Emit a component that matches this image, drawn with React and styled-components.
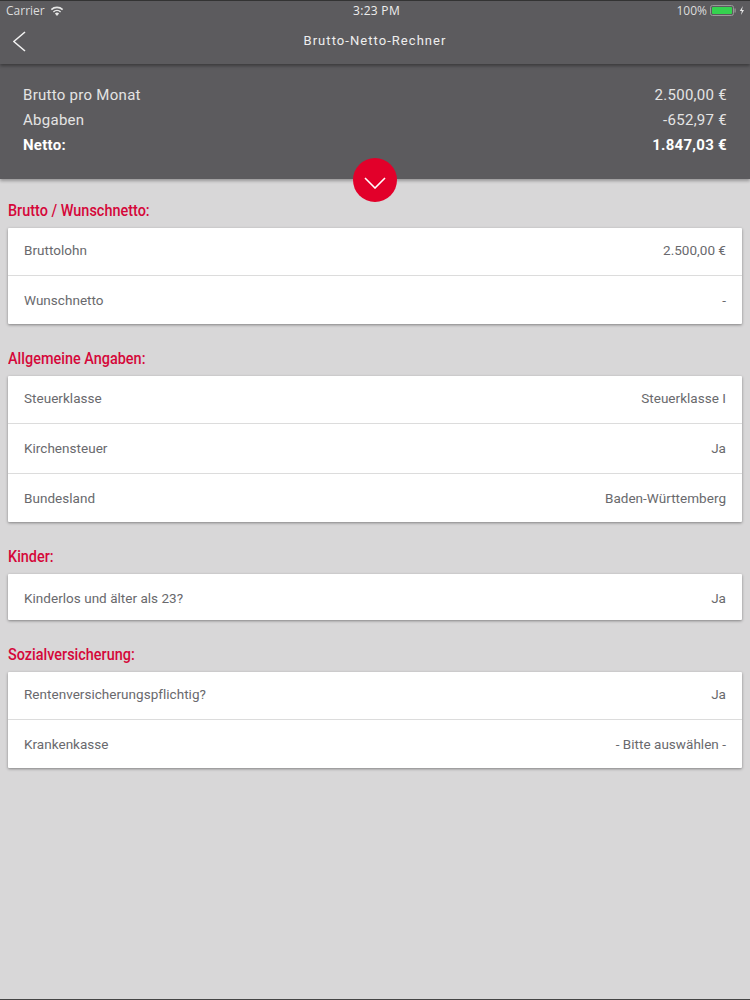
import React from 'react';
import styled, { createGlobalStyle } from 'styled-components';

const Global = createGlobalStyle`
  html, body { margin: 0; padding: 0; background: #d8d7d8; }
  body { font-family: Roboto, "Liberation Sans", sans-serif; }
`;
const Page = styled.div`
  width: 750px; height: 1000px; overflow: hidden; background: #d8d7d8;
  display: flex; flex-direction: column; border-top: 1px solid #333; border-bottom: 1px solid #444; box-sizing: border-box;
`;
const Header = styled.header`
  background: #5c5b5e; color: #fff; box-shadow: 0 2px 3px rgba(0,0,0,.3); position: relative; height: 178px; flex: none;
  display: flex; flex-direction: column;
`;
const TopBar = styled.div`
  height: 63px; flex: none; box-shadow: 0 2px 3px rgba(0,0,0,.35); display: flex; flex-direction: column;
`;
const StatusBar = styled.div`
  height: 19px; display: grid; grid-template-columns: 1fr auto 1fr; align-items: center;
  padding: 0 4px 0 6px; font: 12px "Open Sans", "Liberation Sans", sans-serif; color: #ddd;
`;
const StatusSide = styled.div`
  display: flex; align-items: center; gap: ${p => p.$gap || 5}px; justify-content: ${p => p.$right ? 'flex-end' : 'flex-start'};
`;
const Clock = styled.span`font-weight: 500; color: #eee; font-size: 12px; letter-spacing: .3px; margin-left: 1px;`;
const NavBar = styled.div`
  flex: 1; position: relative; display: flex; align-items: center; justify-content: center;
  font-size: 13px; font-weight: 400; letter-spacing: 1.05px; color: #eee; padding-bottom: 4px;
`;
const Back = styled.svg`position: absolute; left: 13px; top: 11px;`;
const Summary = styled.div`
  padding: 18px 23px 0; display: flex; flex-direction: column;
`;
const SummaryRow = styled.div`
  display: flex; justify-content: space-between; height: 25px; align-items: center;
  font-size: 15px; letter-spacing: .28px; color: ${p => p.$bold ? '#fff' : '#e4e4e4'}; font-weight: ${p => p.$bold ? 700 : 400};
`;
const Toggle = styled.div`
  position: absolute; left: 353px; top: 157px; width: 44px; height: 44px; border-radius: 50%;
  background: #e2002a; display: flex; align-items: center; justify-content: center;
  svg { margin-top: 6px; }
`;
const Content = styled.main`
  padding: 21px 8px 0; display: flex; flex-direction: column;
`;
const Title = styled.h2`
  margin: 0 0 8px; font-size: 17px; line-height: 20px; font-weight: 500; color: #d5073a; white-space: nowrap;
  transform-origin: left; transform: scaleX(.85);
`;
const Card = styled.section`
  background: #fff; box-shadow: 0 1px 3px rgba(0,0,0,.4); margin-bottom: 24px; border-radius: 1px;
`;
const Row = styled.div`
  height: 47px; padding: 0 16px 1px; display: flex; align-items: center; justify-content: space-between;
  font-size: 13.5px; letter-spacing: .03px; color: #69696d;
  & + & { border-top: 1px solid #dcdcdc; }
  &:first-child { padding-bottom: 3px; height: 44px; }
  &:only-child { padding-bottom: 0; height: 47px; margin-bottom: -1px; }
  &:nth-child(2):not(:last-child) { height: 48px; }
`;

const Wifi = () => (
  <svg width="14" height="10" viewBox="0 0 14 10" fill="#e6e6e6">
    <path d="M7 10 4.9 7.6a3 3 0 0 1 4.2 0Z"/>
    <path d="M3.9 6.5 2.9 5.4a6 6 0 0 1 8.2 0l-1 1.1a4.6 4.6 0 0 0-6.2 0Z"/>
    <path d="M1.9 4.3.8 3.1a9 9 0 0 1 12.4 0l-1.1 1.2a7.4 7.4 0 0 0-10.2 0Z"/>
  </svg>
);
const Battery = () => (
  <svg width="36" height="11" viewBox="0 0 36 11">
    <rect x=".5" y=".5" width="23" height="10" rx="2" fill="none" stroke="#999"/>
    <rect x="2" y="2" width="20" height="7" rx="1" fill="#35d24f"/>
    <rect x="24.5" y="3.5" width="1.2" height="4" fill="#999"/>
    <path d="M32.8 1 29.8 6h2l-.8 4 3-5h-2Z" fill="#e6e6e6"/>
  </svg>
);

const sections = [
  ['Brutto / Wunschnetto:', [['Bruttolohn', '2.500,00 €'], ['Wunschnetto', '-']]],
  ['Allgemeine Angaben:', [['Steuerklasse', 'Steuerklasse I'], ['Kirchensteuer', 'Ja'], ['Bundesland', 'Baden-Württemberg']]],
  ['Kinder:', [['Kinderlos und älter als 23?', 'Ja']]],
  ['Sozialversicherung:', [['Rentenversicherungspflichtig?', 'Ja'], ['Krankenkasse', '- Bitte auswählen -']]],
];

export default function App() {
  return (
    <Page>
      <Global />
      <Header>
        <TopBar>
          <StatusBar>
            <StatusSide><span>Carrier</span><Wifi /></StatusSide>
            <Clock>3:23 PM</Clock>
            <StatusSide $right $gap={3}><span>100%</span><Battery /></StatusSide>
          </StatusBar>
          <NavBar>
            <Back width="14" height="22" viewBox="0 0 14 22" fill="none" stroke="#f2f2f2" strokeWidth="1.6"><path d="M12 1 .8 10.5 12 20"/></Back>
            Brutto-Netto-Rechner
          </NavBar>
        </TopBar>
        <Summary>
          <SummaryRow><span>Brutto pro Monat</span><span>2.500,00 €</span></SummaryRow>
          <SummaryRow><span>Abgaben</span><span>-652,97 €</span></SummaryRow>
          <SummaryRow $bold><span>Netto:</span><span>1.847,03 €</span></SummaryRow>
        </Summary>
        <Toggle>
          <svg width="22" height="12" viewBox="0 0 22 12" fill="none" stroke="#fff" strokeWidth="1.6"><path d="M1 1l10 10L21 1"/></svg>
        </Toggle>
      </Header>
      <Content>
        {sections.map(([title, rows]) => (
          <React.Fragment key={title}>
            <Title>{title}</Title>
            <Card>
              {rows.map(([k, v]) => <Row key={k}><span>{k}</span><span>{v}</span></Row>)}
            </Card>
          </React.Fragment>
        ))}
      </Content>
    </Page>
  );
}
